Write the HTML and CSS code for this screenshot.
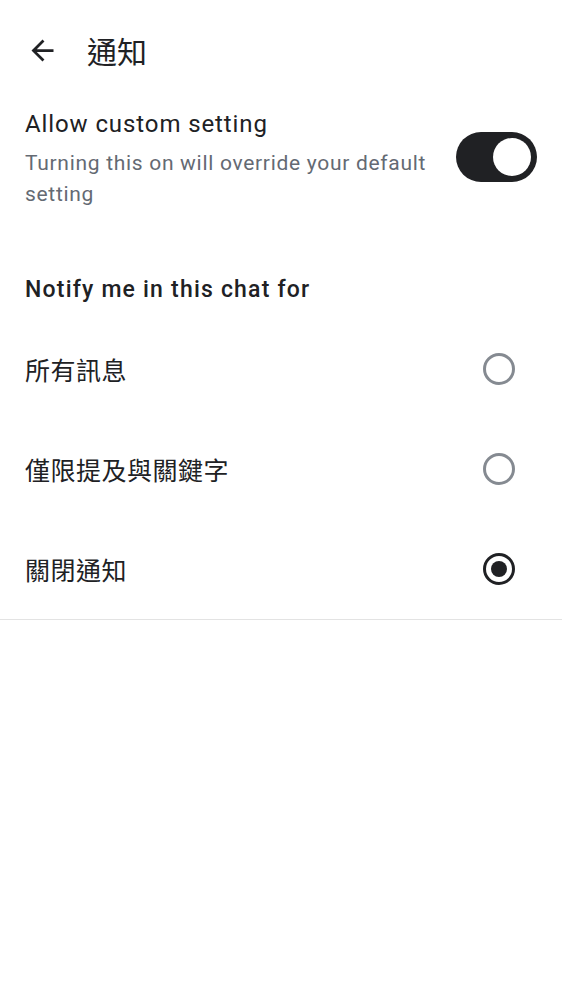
FILE: index.html
```html
<!DOCTYPE html>
<html lang="zh-Hant">
<head>
<meta charset="utf-8">
<title>通知</title>
<link rel="stylesheet" href="styles.css">
</head>
<body>
<header class="appbar">
  <span class="back">
    <svg viewBox="0 0 24 24" width="33" height="33"><path d="M20 11H7.83l5.59-5.59L12 4l-8 8 8 8 1.41-1.41L7.83 13H20v-2z" fill="#202124"/></svg>
  </span>
  <h1 class="title">通知</h1>
</header>
<section class="custom">
  <div class="custom-text">
    <div class="custom-title">Allow custom setting</div>
    <div class="custom-sub">Turning this on will override your default setting</div>
  </div>
  <div class="switch"><span class="thumb"></span></div>
</section>
<h2 class="section-title">Notify me in this chat for</h2>
<ul class="options">
  <li class="option"><span class="label">所有訊息</span><span class="radio"></span></li>
  <li class="option"><span class="label">僅限提及與關鍵字</span><span class="radio"></span></li>
  <li class="option"><span class="label">關閉通知</span><span class="radio checked"></span></li>
</ul>
</body>
</html>
```
FILE: styles.css
```css
html, body {
  margin: 0;
  padding: 0;
  background: #ffffff;
  color: #202124;
  font-family: Roboto, "Noto Sans CJK TC", sans-serif;
}

.appbar {
  height: 100px;
  display: flex;
  align-items: center;
  padding-left: 26px;
}

.back {
  width: 33px;
  height: 33px;
  display: flex;
}

.title {
  margin: 0 0 0 28px;
  font-family: "Noto Sans CJK TC", sans-serif;
  font-weight: 400;
  font-size: 30px;
  line-height: 36px;
}

.custom {
  margin-top: 8px;
  display: flex;
  align-items: flex-start;
  gap: 16px;
  padding: 0 25px;
}

.custom-text {
  flex: 1;
}

.custom-title {
  font-size: 24px;
  line-height: 32px;
  letter-spacing: 0.9px;
}

.custom-sub {
  margin-top: 8px;
  font-size: 21px;
  line-height: 31px;
  color: #646a73;
  letter-spacing: 0.7px;
}

.switch {
  margin-top: 24px;
  width: 81px;
  height: 50px;
  box-sizing: border-box;
  border-radius: 25px;
  background: #202124;
  display: flex;
  align-items: center;
  justify-content: flex-end;
  padding-right: 6px;
  flex-shrink: 0;
}

.thumb {
  width: 38px;
  height: 38px;
  border-radius: 50%;
  background: #ffffff;
}

.section-title {
  margin: 65px 0 0;
  padding: 0 25px;
  font-size: 23px;
  line-height: 30px;
  font-weight: 500;
  letter-spacing: 1.2px;
}

.options {
  list-style: none;
  margin: 14px 0 0;
  padding: 0;
  border-bottom: 1px solid #e3e3e3;
}

.option {
  height: 100px;
  display: flex;
  align-items: center;
  justify-content: space-between;
  padding: 0 47px 0 25px;
}

.label {
  font-family: "Noto Sans CJK TC", sans-serif;
  font-size: 25px;
  letter-spacing: 0.5px;
}

.radio {
  width: 32px;
  height: 32px;
  box-sizing: border-box;
  border-radius: 50%;
  border: 3px solid #858a91;
  display: flex;
  align-items: center;
  justify-content: center;
}

.radio.checked {
  border-color: #202124;
}

.radio.checked::after {
  content: "";
  width: 16px;
  height: 16px;
  border-radius: 50%;
  background: #202124;
}
```
